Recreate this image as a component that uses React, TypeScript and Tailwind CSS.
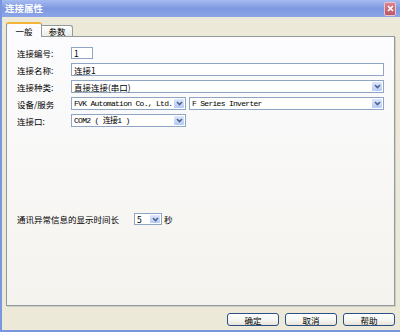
import React from "react";

const Chevron = () => (
  <svg width="7" height="5" viewBox="0 0 7 5">
    <path d="M1 1 L3.5 3.6 L6 1" fill="none" stroke="#4d6185" strokeWidth="1.5" />
  </svg>
);

function Combo({
  text,
  className = "",
  mono = false,
}: {
  text: string;
  className?: string;
  mono?: boolean;
}) {
  return (
    <div className={`h-full bg-white border border-[#8ea6c4] flex items-center pr-[1px] ${className}`}>
      <span
        className={`flex-1 min-w-0 pl-[2px] whitespace-nowrap leading-[10px] ${
          mono
            ? "font-['Liberation_Mono','Noto_Sans_CJK_SC',monospace] text-[8px] tracking-[-0.7px]"
            : "text-[8.5px]"
        }`}
      >
        {text}
      </span>
      <div className="w-[10px] h-[calc(100%-2px)] shrink-0 rounded-[1px] bg-gradient-to-b from-[#dde7fe] to-[#b6caf7] flex items-center justify-center">
        <Chevron />
      </div>
    </div>
  );
}

function TextBox({ text, className = "" }: { text: string; className?: string }) {
  return (
    <div className={`h-full bg-white border border-[#8ea6c4] flex items-center pl-[2px] ${className}`}>
      <span className="text-[8.5px] leading-[10px] whitespace-nowrap">{text}</span>
    </div>
  );
}

function Row({ label, children, h = "h-[13px]" }: { label: string; children: React.ReactNode; h?: string }) {
  return (
    <div className={`flex items-center ${h}`}>
      <div className="w-[54px] shrink-0 text-[8.5px] leading-[10px] whitespace-nowrap">{label}</div>
      <div className="flex-1 h-full flex gap-[3px]">{children}</div>
    </div>
  );
}

function Btn({ text }: { text: string }) {
  return (
    <div className="w-[52px] h-[13px] border border-[#2a4f86] rounded-[3px] bg-gradient-to-b from-white via-[#f7f7f4] to-[#e6e4da] flex items-center justify-center">
      <span className="text-[8.5px] leading-[10px]">{text}</span>
    </div>
  );
}

export default function App() {
  return (
    <div className="w-[400px] h-[332px] bg-[#ece9d8] border-l-2 border-b-2 border-[#7a96df] flex flex-col font-['Noto_Sans_CJK_SC',sans-serif] text-black overflow-hidden">
      {/* Title bar */}
      <div className="h-[17px] shrink-0 bg-gradient-to-b from-[#a6bbf0] via-[#7e99e1] to-[#8ca5e7] flex items-center pl-[3px] pr-[4px]">
        <span className="text-white font-bold text-[9.5px] leading-[11px]">连接属性</span>
        <div className="ml-auto w-[12px] h-[14px] rounded-[2px] bg-gradient-to-b from-[#d9808e] to-[#b9586a] border border-[#eec4cb] flex items-center justify-center">
          <svg width="7" height="7" viewBox="0 0 7 7">
            <path d="M1 1 L6 6 M6 1 L1 6" stroke="white" strokeWidth="1.6" />
          </svg>
        </div>
      </div>

      <div className="flex-1 flex flex-col pl-[4px] pr-[5px]">
        {/* Tabs */}
        <div className="mt-[5px] h-[14px] flex items-end">
          <div className="relative z-10 w-[36px] h-[15px] -mb-[1px] bg-[#fcfcfe] border-x border-[#919b9c] border-t-[2px] border-t-[#f5b539] rounded-t-[3px] flex items-center justify-center">
            <span className="text-[8.5px] leading-[10px]">一般</span>
          </div>
          <div className="w-[31px] h-[11px] bg-gradient-to-b from-white to-[#ecebe5] border-t border-r border-[#919b9c] rounded-tr-[3px] flex items-center justify-center">
            <span className="text-[8.5px] leading-[10px]">参数</span>
          </div>
        </div>

        {/* Panel */}
        <div className="h-[270px] border border-[#919b9c] shadow-[1px_1px_0_#d0cfc4] bg-gradient-to-b from-[#fcfcfe] to-[#f4f3ee] px-[10px] pt-[10px] flex flex-col">
          <div className="flex flex-col gap-[4px]">
            <Row label="连接编号:" h="h-[12px]">
              <TextBox text="1" className="w-[22px]" />
            </Row>
            <Row label="连接名称:">
              <TextBox text="连接1" className="flex-1" />
            </Row>
            <Row label="连接种类:">
              <Combo text="直接连接(串口)" className="flex-1" />
            </Row>
            <Row label="设备/服务">
              <Combo text="FVK Automation Co., Ltd." mono className="w-[115px]" />
              <Combo text="F Series Inverter" mono className="flex-1" />
            </Row>
            <Row label="连接口:">
              <Combo text="COM2 ( 连接1 )" mono className="w-[115px]" />
            </Row>
          </div>

          <div className="mt-[86px] h-[12px] flex items-center">
            <div className="w-[117px] shrink-0 text-[8.5px] leading-[10px] whitespace-nowrap">通讯异常信息的显示时间长</div>
            <Combo text="5" className="w-[28px]" />
            <span className="ml-[2px] text-[8.5px] leading-[10px]">秒</span>
          </div>
        </div>

        {/* Buttons */}
        <div className="mt-[7px] flex justify-end gap-[6px]">
          <Btn text="确定" />
          <Btn text="取消" />
          <Btn text="帮助" />
        </div>
      </div>
    </div>
  );
}
